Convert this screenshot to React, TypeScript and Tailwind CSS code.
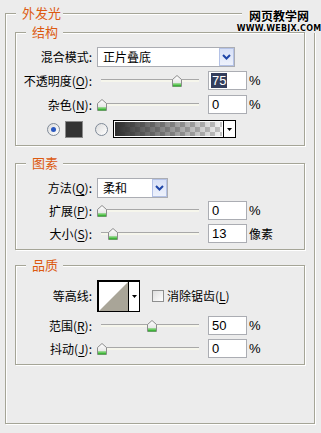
import React from "react";

const font = "font-['Noto_Sans_CJK_SC',sans-serif]";

function Legend({ text, w }: { text: string; w: string }) {
  return (
    <span
      className={`absolute left-[10px] -top-[9px] ${w} pl-[6px] bg-[#ECECEC] text-[13px] leading-[16px] text-[#DC5A10]`}
    >
      {text}
    </span>
  );
}

function Group({ title, className, children }: { title: string; className: string; children: React.ReactNode }) {
  return (
    <div
      className={`relative ml-[9px] w-[290px] border border-[#A5A597] shadow-[1px_1px_0_#fff,inset_1px_1px_0_#fff] ${className}`}
    >
      <Legend text={title} w="w-[37px]" />
      {children}
    </div>
  );
}

function Label({ children }: { children: React.ReactNode }) {
  return <div className="w-[76px] text-right text-[12px] leading-[14px] text-black shrink-0">{children}</div>;
}

function U({ c }: { c: string }) {
  return <span className="underline underline-offset-2">{c}</span>;
}

function Thumb({ pos }: { pos: number }) {
  return (
    <svg className="absolute top-1/2 -translate-y-1/2" style={{ left: pos }} width="10" height="12" viewBox="0 0 10 12">
      <defs>
        <linearGradient id="tb" x1="0" y1="0" x2="0" y2="1">
          <stop offset="0" stopColor="#ffffff" />
          <stop offset="1" stopColor="#dcdcdc" />
        </linearGradient>
      </defs>
      <path d="M0.5 4.5 L5 0.5 L9.5 4.5 L9.5 11.5 L0.5 11.5 Z" fill="url(#tb)" stroke="#8c8c8c" />
      <rect x="1" y="8.5" width="8" height="3" fill="#3fb43a" />
      <rect x="1" y="8.5" width="8" height="1" fill="#9be08f" />
    </svg>
  );
}

function Slider({ pos }: { pos: number }) {
  return (
    <div className="relative w-[111px] h-full flex items-center">
      <div className="ml-[4px] w-[98px] h-[3px] border-t border-[#a8a8a8] bg-[#f6f6ec]" />
      <Thumb pos={pos} />
    </div>
  );
}

function NumInput({ value, selected }: { value: string; selected?: boolean }) {
  return (
    <div className="w-[39px] h-[19px] border border-[#ABADB3] bg-white flex items-center pl-[2px] font-['Liberation_Sans',sans-serif] text-[13px] leading-[15px]">
      {selected ? <span className="bg-[#333D5C] text-white px-[1px]">{value}</span> : <span className="px-[1px]">{value}</span>}
    </div>
  );
}

function DropBtn() {
  return (
    <div className="w-[15px] h-full border border-[#B4C2E6] bg-gradient-to-b from-[#d7e0f7] to-[#eef2fc] flex items-center justify-center">
      <svg width="9" height="6" viewBox="0 0 9 6">
        <path d="M1 1 L4.5 4.5 L8 1" fill="none" stroke="#1f46a8" strokeWidth="2" />
      </svg>
    </div>
  );
}

function Select({ text, w }: { text: string; w: string }) {
  return (
    <div className={`${w} h-[20px] border border-[#ABADB3] bg-white flex items-center`}>
      <span className="flex-1 pl-[5px] text-[12px] leading-[14px]">{text}</span>
      <DropBtn />
    </div>
  );
}

function Radio({ checked }: { checked?: boolean }) {
  return (
    <div className="w-[13px] h-[13px] rounded-full border border-[#7f8a98] bg-gradient-to-br from-[#dcdcdc] to-[#ffffff] flex items-center justify-center shrink-0">
      {checked && <div className="w-[5px] h-[5px] rounded-full bg-[#2a58c0]" />}
    </div>
  );
}

function Row({ className, children }: { className: string; children: React.ReactNode }) {
  return <div className={`flex items-center ${className}`}>{children}</div>;
}

export default function App() {
  return (
    <div className={`relative w-[321px] h-[433px] bg-[#ECECEC] overflow-hidden ${font} text-black`}>
      <div className="pt-[13px] pl-[5px]">
        <div className="relative w-[310px] h-[411px] border border-[#A5A597] shadow-[1px_1px_0_#fff,inset_1px_1px_0_#fff] pt-[18px]">
          <Legend text="外发光" w="w-[47px]" />

          {/* watermark */}
          <div className="absolute -top-[5px] left-[236px] w-[74px] flex flex-col items-center bg-[#ECECEC]">
            <span className="text-[12px] leading-[13px] font-bold tracking-[0px] [text-shadow:0_0_2px_#fff,0_0_2px_#fff,0_0_2px_#fff]">
              网页教学网
            </span>
            <span className="mt-[2px] font-['DejaVu_Sans',sans-serif] font-bold text-[8px] leading-[9px] tracking-[0.2px] [text-shadow:0_0_1px_#fff,0_0_1px_#fff,0_0_1px_#fff]">
              WWW.WEBJX.COM
            </span>
          </div>

          {/* 结构 */}
          <Group title="结构" className="pt-[14px] pb-[7px]">
            <Row className="h-[20px]">
              <Label>混合模式:</Label>
              <div className="ml-[5px]">
                <Select text="正片叠底" w="w-[138px]" />
              </div>
            </Row>
            <Row className="mt-[4px] h-[19px]">
              <Label>
                不透明度(<U c="O" />):
              </Label>
              <div className="ml-[5px] h-full">
                <Slider pos={75} />
              </div>
              <NumInput value="75" selected />
              <span className="ml-[2px] text-[13px] font-['Liberation_Sans',sans-serif]">%</span>
            </Row>
            <Row className="mt-[5px] h-[19px]">
              <Label>
                杂色(<U c="N" />):
              </Label>
              <div className="ml-[5px] h-full">
                <Slider pos={0} />
              </div>
              <NumInput value="0" />
              <span className="ml-[2px] text-[13px] font-['Liberation_Sans',sans-serif]">%</span>
            </Row>
            <Row className="mt-[6px] h-[18px]">
              <div className="ml-[31px]">
                <Radio checked />
              </div>
              <div className="ml-[5px] w-[18px] h-[17px] border border-[#8a8a8a] bg-[#333333]" />
              <div className="ml-[12px]">
                <Radio />
              </div>
              <div className="ml-[5px] w-[123px] h-[18px] border border-black flex">
                <div className="flex-1 border border-white bg-[linear-gradient(to_right,#2e2e2e,rgba(46,46,46,0)),conic-gradient(#c4c4c4_25%,#f4f4f4_0_50%,#c4c4c4_0_75%,#f4f4f4_0)] [background-size:100%_100%,10px_10px]" />
                <div className="w-[12px] border-l border-black bg-white flex items-center justify-center">
                  <svg width="5" height="3" viewBox="0 0 5 3">
                    <path d="M0 0 H5 L2.5 3 Z" fill="#000" />
                  </svg>
                </div>
              </div>
            </Row>
          </Group>

          {/* 图素 */}
          <Group title="图素" className="mt-[17px] pt-[14px] pb-[6px]">
            <Row className="h-[20px]">
              <Label>
                方法(<U c="Q" />):
              </Label>
              <div className="ml-[5px]">
                <Select text="柔和" w="w-[71px]" />
              </div>
            </Row>
            <Row className="mt-[3px] h-[19px]">
              <Label>
                扩展(<U c="P" />):
              </Label>
              <div className="ml-[5px] h-full">
                <Slider pos={0} />
              </div>
              <NumInput value="0" />
              <span className="ml-[2px] text-[13px] font-['Liberation_Sans',sans-serif]">%</span>
            </Row>
            <Row className="mt-[4px] h-[19px]">
              <Label>
                大小(<U c="S" />):
              </Label>
              <div className="ml-[5px] h-full">
                <Slider pos={11} />
              </div>
              <NumInput value="13" />
              <span className="ml-[2px] text-[12px]">像素</span>
            </Row>
          </Group>

          {/* 品质 */}
          <Group title="品质" className="mt-[15px] pt-[14px] pb-[6px]">
            <Row className="h-[32px]">
              <Label>等高线:</Label>
              <div className="ml-[5px] w-[43px] h-[32px] border border-black border-l-2 border-t-2 bg-white flex">
                <svg width="29" height="29" viewBox="0 0 29 29" className="shrink-0">
                  <polygon points="0,29 29,0 29,29" fill="#A9A598" />
                </svg>
                <div className="flex-1 border-l border-black flex items-center justify-center">
                  <svg width="5" height="3" viewBox="0 0 5 3">
                    <path d="M0 0 H5 L2.5 3 Z" fill="#000" />
                  </svg>
                </div>
              </div>
              <div className="ml-[12px] w-[12px] h-[12px] border border-[#8e8f8f] bg-gradient-to-br from-[#dedede] to-white" />
              <span className="ml-[3px] text-[12px] leading-[14px]">
                消除锯齿(<U c="L" />)
              </span>
            </Row>
            <Row className="mt-[4px] h-[19px]">
              <Label>
                范围(<U c="R" />):
              </Label>
              <div className="ml-[5px] h-full">
                <Slider pos={50} />
              </div>
              <NumInput value="50" />
              <span className="ml-[2px] text-[13px] font-['Liberation_Sans',sans-serif]">%</span>
            </Row>
            <Row className="mt-[4px] h-[19px]">
              <Label>
                抖动(<U c="J" />):
              </Label>
              <div className="ml-[5px] h-full">
                <Slider pos={0} />
              </div>
              <NumInput value="0" />
              <span className="ml-[2px] text-[13px] font-['Liberation_Sans',sans-serif]">%</span>
            </Row>
          </Group>
        </div>
      </div>
    </div>
  );
}
